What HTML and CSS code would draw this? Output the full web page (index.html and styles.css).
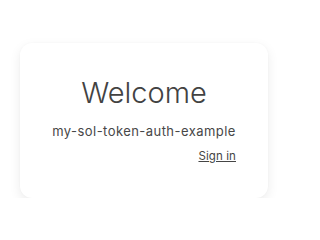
FILE: index.html
```html
<!DOCTYPE html>
<html lang="en">
<head>
<meta charset="utf-8">
<title>Welcome</title>
<link rel="stylesheet" href="styles.css">
</head>
<body>
<main class="page">
  <section class="card">
    <h1 class="title">Welcome</h1>
    <p class="subtitle">my-sol-token-auth-example</p>
    <div class="actions"><a class="signin" href="#">Sign in</a></div>
  </section>
</main>
</body>
</html>
```
FILE: styles.css
```css
html, body {
  margin: 0;
  padding: 0;
  background: #ffffff;
}
body {
  font-family: Inter, "Noto Sans", "Liberation Sans", sans-serif;
  color: #404040;
}
.page {
  padding: 43px 22px 0 20px;
}
.card {
  width: 248px;
  box-sizing: border-box;
  padding: 32px 32px 33px;
  border-radius: 12px;
  background: #ffffff;
  box-shadow: 0 4px 12px rgba(0, 0, 0, 0.08), 0 0 2px rgba(0, 0, 0, 0.03);
  display: flex;
  flex-direction: column;
  align-items: center;
}
.title {
  margin: 0;
  font-size: 29px;
  line-height: 35px;
  font-weight: 350;
  color: #424242;
}
.subtitle {
  margin: 12px 0 0;
  font-size: 13px;
  line-height: 18px;
  letter-spacing: 0.45px;
  color: #474747;
}
.actions {
  align-self: stretch;
  display: flex;
  justify-content: flex-end;
  margin-top: 7px;
}
.signin {
  font-size: 11.5px;
  line-height: 18px;
  letter-spacing: 0.1px;
  color: #454545;
  text-decoration: underline;
}
```
